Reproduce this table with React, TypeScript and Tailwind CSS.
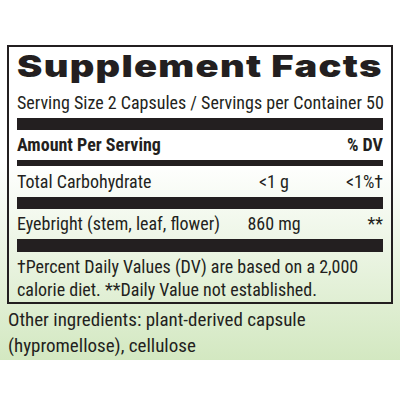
const body = "font-['Roboto','Liberation_Sans',sans-serif] font-stretch-condensed";

const Row = ({ name, amount, dv, h }: { name: string; amount: string; dv: string; h: string }) => (
  <div className={`flex items-center ${h}`}>
    <span className="w-[226px]">{name}</span>
    <span className="w-[62px] text-center">{amount}</span>
    <span className="flex-1 text-right">{dv}</span>
  </div>
);

export default function App() {
  return (
    <div className={`w-[400px] h-[400px] bg-white text-[#231f20] overflow-hidden ${body}`}>
      <div className="h-[360px] pt-[45px] bg-[linear-gradient(to_bottom,#ffffff_45%,#d3e8c1)]">
        <div className="mx-[7px] border-2 border-[#231f20] px-[8px]">
          <div className="h-[43px]">
            <h1 className="w-fit leading-[38px] text-[30px] font-black tracking-[1px] font-['Inter',sans-serif] font-stretch-normal whitespace-nowrap origin-left scale-x-[1.27]">
              Supplement Facts
            </h1>
          </div>
          <p className="h-[28px] leading-[26px] text-[18px] whitespace-nowrap">
            Serving Size 2 Capsules / Servings per Container 50
          </p>
          <div className="h-[12px] bg-[#231f20]" />
          <div className="flex justify-between h-[30px] leading-[30px] text-[18px] font-bold">
            <span>Amount Per Serving</span>
            <span>% DV</span>
          </div>
          <div className="h-[6px] bg-[#231f20]" />
          <div className="text-[18px] leading-[30px]">
            <Row name="Total Carbohydrate" amount="<1 g" dv="<1%†" h="h-[31px]" />
            <div className="h-[12px] bg-[#231f20]" />
            <Row name="Eyebright (stem, leaf, flower)" amount="860 mg" dv="**" h="h-[30px]" />
          </div>
          <div className="h-[13px] bg-[#231f20]" />
          <p className="pt-[3px] pb-[1px] text-[18px] leading-[23px]">
            †Percent Daily Values (DV) are based on a 2,000
            <br />
            calorie diet. **Daily Value not established.
          </p>
        </div>
        <p className="pt-[3px] px-[8px] text-[19px] leading-[26px]">
          Other ingredients: plant-derived capsule
          <br />
          (hypromellose), cellulose
        </p>
      </div>
    </div>
  );
}
